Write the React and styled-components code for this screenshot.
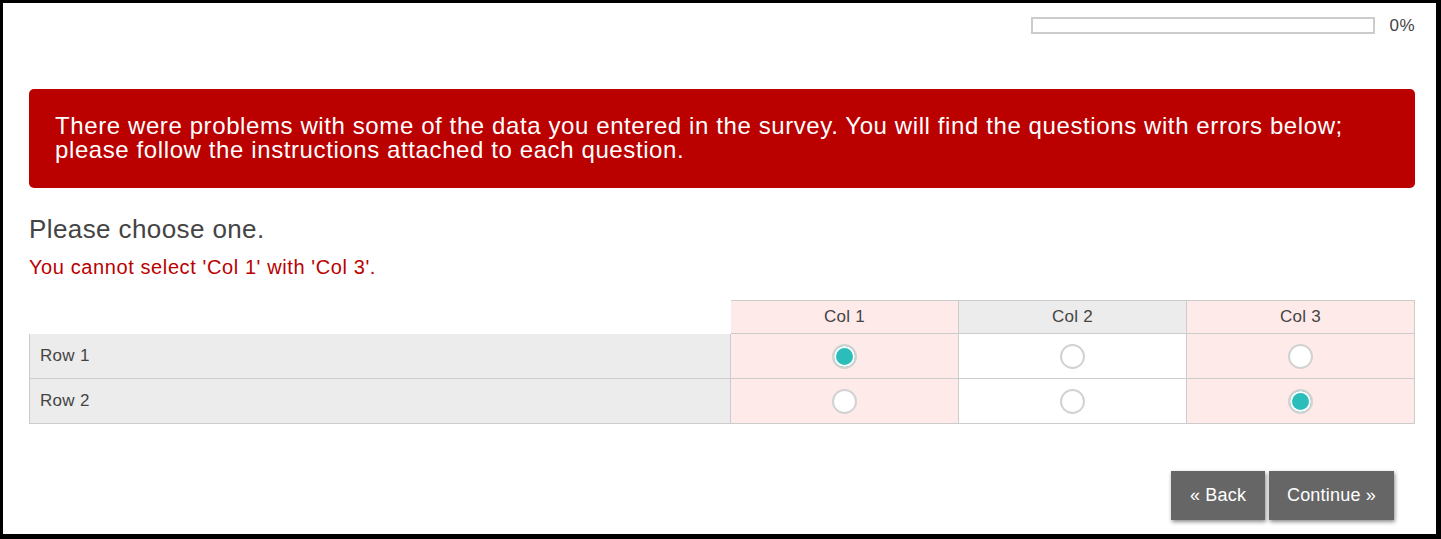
import React from 'react';
import styled, { createGlobalStyle } from 'styled-components';

const GlobalStyle = createGlobalStyle`
  html, body {
    margin: 0;
    padding: 0;
    background: #fff;
  }
  body {
    font-family: "Liberation Sans", Arial, sans-serif;
  }
`;

const Frame = styled.div`
  width: 1441px;
  height: 539px;
  box-sizing: border-box;
  border: 3px solid #000;
  border-right-width: 5px;
  border-bottom-width: 5px;
  background: #fff;
  padding: 14px 21px 0 26px;
  display: flex;
  flex-direction: column;
`;

const ProgressRow = styled.div`
  display: flex;
  justify-content: flex-end;
  align-items: center;
  gap: 14px;
  height: 17px;
`;

const ProgressTrack = styled.div`
  width: 344px;
  height: 17px;
  box-sizing: border-box;
  border: 2px solid #cccccc;
  background: #fff;
`;

const ProgressLabel = styled.span`
  font-size: 17px;
  letter-spacing: 0.5px;
  color: #444;
`;

const Alert = styled.div`
  margin-top: 55px;
  background: #bb0000;
  border-radius: 5px;
  color: #fff;
  font-size: 24px;
  line-height: 24px;
  letter-spacing: 0.6px;
  padding: 25px 26px 26px;
`;

const Title = styled.h2`
  margin: 27px 0 0;
  font-weight: normal;
  font-size: 26px;
  line-height: 29px;
  letter-spacing: 0.4px;
  color: #444;
`;

const ErrorText = styled.p`
  margin: 11px 0 0;
  font-size: 20px;
  line-height: 24px;
  letter-spacing: 0.6px;
  color: #bb0000;
`;

const Grid = styled.table`
  margin-top: 21px;
  width: 100%;
  border-collapse: collapse;
  table-layout: fixed;
  color: #444;
  font-size: 17px;
  letter-spacing: 0.3px;
`;

const HeadCell = styled.th`
  height: 32px;
  padding: 0;
  font-weight: normal;
  text-align: center;
  border: 1px solid ${(p) => (p.$blank ? 'transparent' : '#cccccc')};
  background: ${(p) => (p.$blank ? 'transparent' : p.$error ? '#ffeaea' : '#ececec')};
`;

const RowLabel = styled.td`
  height: 44px;
  padding: 0 0 0 10px;
  border: 1px solid #cccccc;
  background: #ececec;
`;

const Cell = styled.td`
  height: 44px;
  padding: 0;
  text-align: center;
  vertical-align: middle;
  border: 1px solid #cccccc;
  background: ${(p) => (p.$error ? '#ffeaea' : '#fff')};
`;

const Radio = styled.span`
  display: inline-block;
  vertical-align: middle;
  width: 25px;
  height: 25px;
  box-sizing: border-box;
  border-radius: 50%;
  border: 2px solid #d2d2d2;
  background: ${(p) => (p.$checked ? '#2bbdb9' : '#fff')};
  box-shadow: ${(p) => (p.$checked ? 'inset 0 0 0 2px #fff' : 'none')};
`;

const Actions = styled.div`
  margin-top: 47px;
  display: flex;
  justify-content: flex-end;
  gap: 4px;
  padding-right: 21px;
`;

const NavButton = styled.button`
  height: 49px;
  width: ${(p) => p.$width}px;
  padding: 0;
  border: none;
  background: #666666;
  color: #fff;
  font-family: "Liberation Sans", Arial, sans-serif;
  font-size: 18px;
  letter-spacing: 0.2px;
  box-shadow: 1px 2px 4px rgba(0, 0, 0, 0.45);
  cursor: pointer;
`;

const columns = [
  { label: 'Col 1', error: true },
  { label: 'Col 2', error: false },
  { label: 'Col 3', error: true },
];

const rows = [
  { label: 'Row 1', checked: 0 },
  { label: 'Row 2', checked: 2 },
];

export default function App() {
  return (
    <>
      <GlobalStyle />
      <Frame>
        <ProgressRow>
          <ProgressTrack />
          <ProgressLabel>0%</ProgressLabel>
        </ProgressRow>
        <Alert>
          There were problems with some of the data you entered in the survey. You will find the
          questions with errors below; please follow the instructions attached to each question.
        </Alert>
        <Title>Please choose one.</Title>
        <ErrorText>You cannot select 'Col 1' with 'Col 3'.</ErrorText>
        <Grid>
          <colgroup>
            <col style={{ width: '701px' }} />
            <col />
            <col />
            <col />
          </colgroup>
          <thead>
            <tr>
              <HeadCell $blank />
              {columns.map((c) => (
                <HeadCell key={c.label} $error={c.error}>
                  {c.label}
                </HeadCell>
              ))}
            </tr>
          </thead>
          <tbody>
            {rows.map((r) => (
              <tr key={r.label}>
                <RowLabel>{r.label}</RowLabel>
                {columns.map((c, i) => (
                  <Cell key={c.label} $error={c.error}>
                    <Radio $checked={r.checked === i} />
                  </Cell>
                ))}
              </tr>
            ))}
          </tbody>
        </Grid>
        <Actions>
          <NavButton $width={94}>« Back</NavButton>
          <NavButton $width={125}>Continue »</NavButton>
        </Actions>
      </Frame>
    </>
  );
}
